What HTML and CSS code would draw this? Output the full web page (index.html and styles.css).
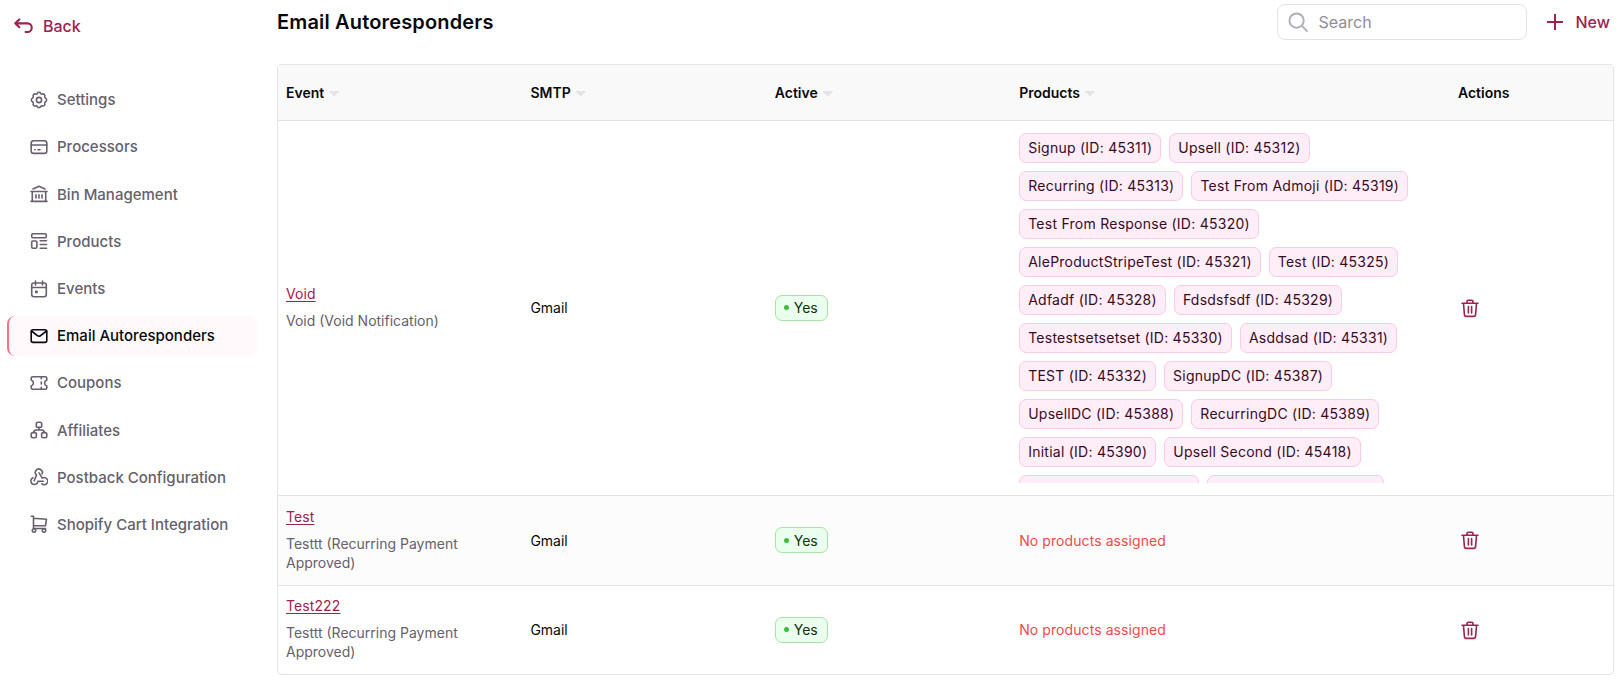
FILE: index.html
```html
<!DOCTYPE html>
<html lang="en">
<head>
<meta charset="utf-8">
<title>Email Autoresponders</title>
<link rel="stylesheet" href="styles.css">
</head>
<body>
<svg class="defs" aria-hidden="true">
  <symbol id="trash" viewBox="0 0 18 20"><path d="M1 5.300h16M6 5.300V3.400c0-.8.4-1.200 1.200-1.200h3.600c.8 0 1.200.4 1.200 1.200v1.900M2.500 5.500l.9 11c.1 1.300.7 1.900 1.900 1.900h7.400c1.200 0 1.800-.6 1.900-1.900l.9-11M7.400 8.500v6.500M10.600 8.500v6.500"/></symbol>
</svg>
<div class="app">
  <aside class="sidebar">
    <a class="back"><svg class="back-icon" viewBox="0 0 18 16"><path d="M5 1.300 1.200 5l3.800 3.700M1.500 5h11.200a4.100 4.100 0 0 1 0 8.200h-1.700"/></svg>Back</a>
    <nav class="nav">
      <a class="item"><svg viewBox="0 0 18 18"><path d="M7.300 2.300C8 .9 10 .9 10.700 2.300c.4.700 1 .9 1.700.7 1.500-.5 2.900.9 2.400 2.400-.2.700.1 1.400.7 1.700 1.500.8 1.500 2.900 0 3.700-.6.300-.9 1-.7 1.700.5 1.500-.9 2.900-2.400 2.400-.7-.2-1.300 0-1.700.7-.7 1.400-2.700 1.400-3.400 0-.4-.7-1-.9-1.700-.7-1.500.5-2.900-.9-2.400-2.400.2-.7-.1-1.400-.7-1.700-1.500-.8-1.500-2.900 0-3.700.6-.3.9-1 .7-1.700C2.700 3.900 4.100 2.500 5.600 3c.7.2 1.300 0 1.700-.7Z"/><circle cx="9" cy="9" r="2.600"/></svg>Settings</a>
      <a class="item"><svg viewBox="0 0 18 18"><rect x="1.200" y="2.800" width="15.600" height="12.600" rx="2.500"/><path d="M1.200 7h15.600M4.800 11.700h.4M8 11.700h2"/></svg>Processors</a>
      <a class="item"><svg viewBox="0 0 18 18"><path d="M3 4 9 1.300 15 4M1 6.500h16M2.300 6.500v9.800M15.700 6.500v9.800M1 16.400h16M6 9.900v3.200M9 9.900v3.200M12 9.900v3.200"/></svg>Bin Management</a>
      <a class="item"><svg viewBox="0 0 18 18"><rect x="1.700" y="1.700" width="14.600" height="4" rx="1.200"/><rect x="1.700" y="9" width="5.200" height="7.300" rx="1.200"/><path d="M10.200 8.800h6.300M10.200 12.500h6.300M10.200 16.200h6.300"/></svg>Products</a>
      <a class="item"><svg viewBox="0 0 18 18"><rect x="1.700" y="3" width="14.600" height="13.800" rx="2.200"/><path d="M1.700 7.500h14.600M5.500 1v4M12.500 1v4"/><rect class="dot" x="5" y="10.500" width="2.800" height="2.800" rx=".6"/></svg>Events</a>
      <a class="item active"><svg viewBox="0 0 18 18"><rect x="1.200" y="2.800" width="15.600" height="12.600" rx="1.800"/><path d="m1.500 4 5.900 4.600c1 .8 2.200.8 3.200 0L16.500 4"/></svg>Email Autoresponders</a>
      <a class="item"><svg viewBox="0 0 18 18"><path d="M2.700 2.800h12.600c.9 0 1.500.6 1.500 1.500v1.600c-1.500.6-2.200 1.600-2.200 3.100s.7 2.500 2.200 3.100v1.600c0 .9-.6 1.500-1.500 1.500H2.700c-.9 0-1.500-.6-1.500-1.500v-1.600C2.700 11.500 3.400 10.500 3.400 9S2.700 6.500 1.200 5.900V4.300c0-.9.6-1.500 1.500-1.500ZM11.300 3v1.800M11.300 8v2M11.300 13.200V15"/></svg>Coupons</a>
      <a class="item"><svg viewBox="0 0 18 18"><rect x="6.300" y="1.200" width="5.400" height="5.200" rx="1.700"/><rect x="1.200" y="11.600" width="5.200" height="5.200" rx="1.700"/><rect x="11.600" y="11.600" width="5.200" height="5.200" rx="1.700"/><path d="M9 6.500V9M3.800 11.500c0-1.700.8-2.500 2.500-2.500h5.400c1.700 0 2.500.8 2.500 2.500"/></svg>Affiliates</a>
      <a class="item"><svg viewBox="0 0 18 18"><path d="M3 9.800a3.500 3.500 0 1 0 4.900 3.500h5.300M12.100 5.800a3.500 3.500 0 1 0-5.600 1.300L4.200 12.700M9 4.900l3.300 5.300a3.500 3.500 0 1 1-.3 5.600"/></svg>Postback Configuration</a>
      <a class="item"><svg viewBox="0 0 18 18"><path d="M1.300 1.300h2.200v12.200h12M3.500 3.300l13 .9-1 6.500h-12"/><circle cx="4" cy="15.500" r="1.700"/><circle cx="14" cy="15.500" r="1.700"/></svg>Shopify Cart Integration</a>
    </nav>
  </aside>
  <main class="main">
    <header class="top">
      <h1>Email Autoresponders</h1>
      <div class="search"><svg viewBox="0 0 22 22"><circle cx="9" cy="9" r="7.500"/><path d="m14.500 14.500 6 6"/></svg>Search</div>
      <a class="new"><svg viewBox="0 0 16 16"><path d="M8 0v16M0 8h16"/></svg>New</a>
    </header>
    <section class="table">
      <div class="row head">
        <div class="cell">Event<i class="caret"></i></div>
        <div class="cell">SMTP<i class="caret"></i></div>
        <div class="cell">Active<i class="caret"></i></div>
        <div class="cell">Products<i class="caret"></i></div>
        <div class="cell">Actions</div>
      </div>
      <div class="row">
        <div class="cell event"><a class="link">Void</a><p>Void (Void Notification)</p></div>
        <div class="cell">Gmail</div>
        <div class="cell"><span class="yes"><i></i>Yes</span></div>
        <div class="cell products">
          <div class="chips">
            <span>Signup (ID: 45311)</span><span>Upsell (ID: 45312)</span>
            <span>Recurring (ID: 45313)</span><span>Test From Admoji (ID: 45319)</span>
            <span>Test From Response (ID: 45320)</span>
            <span>AleProductStripeTest (ID: 45321)</span><span>Test (ID: 45325)</span>
            <span>Adfadf (ID: 45328)</span><span>Fdsdsfsdf (ID: 45329)</span>
            <span>Testestsetsetset (ID: 45330)</span><span>Asddsad (ID: 45331)</span>
            <span>TEST (ID: 45332)</span><span>SignupDC (ID: 45387)</span>
            <span>UpsellDC (ID: 45388)</span><span>RecurringDC (ID: 45389)</span>
            <span>Initial (ID: 45390)</span><span>Upsell Second (ID: 45418)</span>
            <span class="w180"></span><span class="w177"></span>
          </div>
        </div>
        <div class="cell"><svg class="trash"><use href="#trash"/></svg></div>
      </div>
      <div class="row alt">
        <div class="cell event"><a class="link">Test</a><p>Testtt (Recurring Payment Approved)</p></div>
        <div class="cell">Gmail</div>
        <div class="cell"><span class="yes"><i></i>Yes</span></div>
        <div class="cell none">No products assigned</div>
        <div class="cell"><svg class="trash"><use href="#trash"/></svg></div>
      </div>
      <div class="row">
        <div class="cell event"><a class="link">Test222</a><p>Testtt (Recurring Payment Approved)</p></div>
        <div class="cell">Gmail</div>
        <div class="cell"><span class="yes"><i></i>Yes</span></div>
        <div class="cell none">No products assigned</div>
        <div class="cell"><svg class="trash"><use href="#trash"/></svg></div>
      </div>
    </section>
  </main>
</div>
</body>
</html>
```
FILE: styles.css
```css
* { box-sizing: border-box; }
body { margin: 0; font-family: Inter, "Liberation Sans", sans-serif; font-size: 14px; color: #09090b; background: #fff; }
svg { fill: none; stroke: currentColor; stroke-width: 1.6; stroke-linecap: round; stroke-linejoin: round; flex: none; }
.defs { display: none; }
.app { display: flex; height: 682px; overflow: hidden; }
.sidebar { width: 277px; flex: none; padding: 14px 20px 0 7px; }
.back { display: flex; align-items: center; gap: 10px; height: 24px; padding-left: 7px; color: #9c2250; font-size: 16px; font-weight: 500; }
.back-icon { width: 19px; height: 17px; stroke-width: 2; }
.nav { display: flex; flex-direction: column; gap: 7.6px; margin-top: 42px; }
.item { display: flex; align-items: center; gap: 9px; height: 39.6px; padding-left: 21px; border-left: 2px solid transparent; border-radius: 8px; color: #65616d; font-size: 15px; font-weight: 500; white-space: nowrap; }
.item svg { width: 18px; height: 18px; }
.item .dot { fill: currentColor; stroke: none; }
.item.active { background: #fff9fb; border-left-color: #fb6e88; color: #09090b; }
.main { flex: 1; min-width: 0; padding: 4px 5px 0 0; }
.top { display: flex; align-items: center; height: 36px; }
h1 { margin: 0 auto 0 0; font-size: 20px; font-weight: 600; letter-spacing: .16px; }
.search { display: flex; align-items: center; gap: 10px; width: 250px; height: 36px; padding-left: 10px; border: 1px solid #e4e4e7; border-radius: 8px; color: #918d99; font-size: 16px; }
.search svg { width: 21px; height: 21px; color: #b1aeb8; stroke-width: 2; stroke-linecap: butt; }
.new { display: flex; align-items: center; gap: 13px; margin: 0 4px 0 20px; color: #9c2250; font-size: 16px; font-weight: 500; }
.new svg { width: 16px; height: 16px; stroke-width: 2; stroke-linecap: butt; }
.table { margin-top: 24px; border: 1px solid #e4e4e5; border-radius: 4px; overflow: hidden; }
.row { display: grid; grid-template-columns: 244.4px 244.4px 244.4px 438.800px 1fr; align-items: center; }
.row + .row { border-top: 1px solid #e4e4e5; }
.row.head { min-height: 55px; background: #f9f9f9; font-weight: 600; }
.row.alt { background: #fcfcfc; }
.cell { padding: 11.7px 8px 12.3px; }
.head .cell, .cell.products { padding: 12px 8px; }
.caret { display: inline-block; width: 10px; height: 5px; margin-left: 5px; background: #e4e4e7; clip-path: polygon(0 0, 100% 0, 100% 10%, 56% 100%, 44% 100%, 0 10%); vertical-align: 2px; }
.event p { margin: 8px 0 0; color: #65616d; line-height: 18.9px; }
.link { display: block; color: #9c2250; line-height: 18.9px; text-decoration: underline; text-underline-offset: 2px; letter-spacing: .1px; }
.yes { display: inline-flex; align-items: center; gap: 5px; height: 26px; padding: 0 9px 0 8px; border: 1px solid #a5e5a5; border-radius: 7px; background: #ebffee; color: #12330f; vertical-align: middle; }
.yes i { width: 5px; height: 5px; border-radius: 50%; background: #3dbb3d; }
.chips { display: flex; flex-wrap: wrap; align-content: flex-start; gap: 8px; height: 350px; overflow: hidden; }
.chips span { height: 30px; padding: 0 8px; border: 1px solid #f9cbe4; border-radius: 7px; background: #ffedf7; color: #370b23; line-height: 28px; letter-spacing: .25px; white-space: nowrap; }
.chips .w180 { width: 180px; }
.chips .w177 { width: 177px; }
.none { color: #f5484a; letter-spacing: .08px; }
.trash { display: block; width: 18px; height: 20px; margin-left: 3px; color: #9c2250; }
```
